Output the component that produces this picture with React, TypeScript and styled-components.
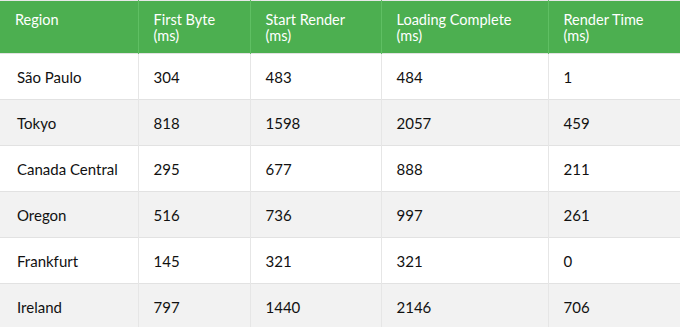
import React from "react";
import styled, { createGlobalStyle } from "styled-components";

const Global = createGlobalStyle`
  html, body { margin: 0; padding: 0; background: #fff; }
  body { font-family: Lato, "Open Sans", "Noto Sans", sans-serif; }
`;

const Table = styled.table`
  width: 682px;
  border-collapse: collapse;
  table-layout: fixed;
  border-top: 1px solid #e8e8e8;
  color: #111;
`;

const Col = styled.col<{ $w: number }>`
  width: ${(p) => p.$w}px;
`;

const HeadCell = styled.th`
  background: #4caf50;
  color: #fff;
  font-weight: 400;
  font-size: 14.5px;
  line-height: 16px;
  text-align: left;
  vertical-align: top;
  padding: 11px 14px 9px 15px;
  height: 32px;
  border-left: 1px solid #5fbf63;
  &:first-child { border-left: none; }
`;

const Row = styled.tr<{ $alt: boolean }>`
  background: ${(p) => (p.$alt ? "#f2f2f2" : "#ffffff")};
  border-top: 1px solid #e2e2e2;
`;

const Cell = styled.td`
  font-size: 15px;
  height: 45px;
  padding: 0 14px 0 15px;
  vertical-align: middle;
  border-left: 1px solid #e6e6e6;
  &:first-child { border-left: none; padding-left: 17px; }
`;

const headers = [
  ["Region", ""],
  ["First Byte", "(ms)"],
  ["Start Render", "(ms)"],
  ["Loading Complete", "(ms)"],
  ["Render Time", "(ms)"],
];

const rows = [
  ["São Paulo", "304", "483", "484", "1"],
  ["Tokyo", "818", "1598", "2057", "459"],
  ["Canada Central", "295", "677", "888", "211"],
  ["Oregon", "516", "736", "997", "261"],
  ["Frankfurt", "145", "321", "321", "0"],
  ["Ireland", "797", "1440", "2146", "706"],
];

const widths = [138, 112, 131, 167, 134];

export default function App() {
  return (
    <>
      <Global />
      <Table>
        <colgroup>
          {widths.map((w, i) => (
            <Col key={i} $w={w} />
          ))}
        </colgroup>
        <thead>
          <tr>
            {headers.map(([a, b]) => (
              <HeadCell key={a}>
                {a}
                {b && <br />}
                {b}
              </HeadCell>
            ))}
          </tr>
        </thead>
        <tbody>
          {rows.map((r, i) => (
            <Row key={r[0]} $alt={i % 2 === 1}>
              {r.map((c, j) => (
                <Cell key={j}>{c}</Cell>
              ))}
            </Row>
          ))}
        </tbody>
      </Table>
    </>
  );
}
